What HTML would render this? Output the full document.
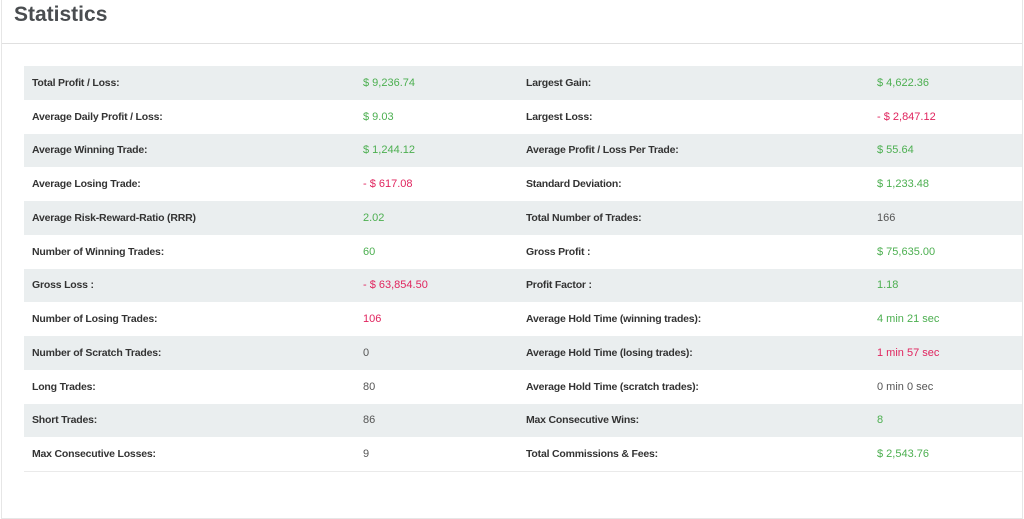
<!DOCTYPE html>
<html><head><meta charset="utf-8"><style>
body{margin:0;width:1024px;height:494px;background:#fff;font-family:"Liberation Sans",sans-serif;overflow:hidden;position:relative}
.frame{position:absolute;left:1px;top:-2px;width:1020px;height:520px;border:1px solid #e6e6e6;border-top:none}
h1{position:absolute;left:14px;top:3px;margin:0;font-size:21px;font-weight:bold;color:#4a4d50}
.hr{position:absolute;left:2px;right:2px;top:43px;border-top:1px solid #e0e0e0}
table{position:absolute;left:24px;top:66px;width:998px;border-collapse:collapse;font-size:10.5px}
td{height:33.75px;padding:0;vertical-align:middle}
tr:nth-child(odd){background:#eaeeef}
tr:last-child{border-bottom:1px solid #eaeaea}
td.l{font-weight:bold;color:#333;letter-spacing:-0.2px}
td.c1{padding-left:8px;width:331px}
td.c2{width:163px;font-size:11px}
td.c3{width:351px}
td.v{font-size:11px}
.g{color:#4caf50}.r{color:#e0245e}.n{color:#555}
</style></head><body>
<div class="frame"></div>
<h1>Statistics</h1>
<div class="hr"></div>
<table>
<tr><td class="l c1">Total Profit / Loss:</td><td class="c2 g">$ 9,236.74</td><td class="l c3">Largest Gain:</td><td class="v g">$ 4,622.36</td></tr>
<tr><td class="l c1">Average Daily Profit / Loss:</td><td class="c2 g">$ 9.03</td><td class="l c3">Largest Loss:</td><td class="v r">- $ 2,847.12</td></tr>
<tr><td class="l c1">Average Winning Trade:</td><td class="c2 g">$ 1,244.12</td><td class="l c3">Average Profit / Loss Per Trade:</td><td class="v g">$ 55.64</td></tr>
<tr><td class="l c1">Average Losing Trade:</td><td class="c2 r">- $ 617.08</td><td class="l c3">Standard Deviation:</td><td class="v g">$ 1,233.48</td></tr>
<tr><td class="l c1">Average Risk-Reward-Ratio (RRR)</td><td class="c2 g">2.02</td><td class="l c3">Total Number of Trades:</td><td class="v n">166</td></tr>
<tr><td class="l c1">Number of Winning Trades:</td><td class="c2 g">60</td><td class="l c3">Gross Profit :</td><td class="v g">$ 75,635.00</td></tr>
<tr><td class="l c1">Gross Loss :</td><td class="c2 r">- $ 63,854.50</td><td class="l c3">Profit Factor :</td><td class="v g">1.18</td></tr>
<tr><td class="l c1">Number of Losing Trades:</td><td class="c2 r">106</td><td class="l c3">Average Hold Time (winning trades):</td><td class="v g">4 min 21 sec</td></tr>
<tr><td class="l c1">Number of Scratch Trades:</td><td class="c2 n">0</td><td class="l c3">Average Hold Time (losing trades):</td><td class="v r">1 min 57 sec</td></tr>
<tr><td class="l c1">Long Trades:</td><td class="c2 n">80</td><td class="l c3">Average Hold Time (scratch trades):</td><td class="v n">0 min 0 sec</td></tr>
<tr><td class="l c1">Short Trades:</td><td class="c2 n">86</td><td class="l c3">Max Consecutive Wins:</td><td class="v g">8</td></tr>
<tr><td class="l c1">Max Consecutive Losses:</td><td class="c2 n">9</td><td class="l c3">Total Commissions &amp; Fees:</td><td class="v g">$ 2,543.76</td></tr>
</table>
</body></html>
